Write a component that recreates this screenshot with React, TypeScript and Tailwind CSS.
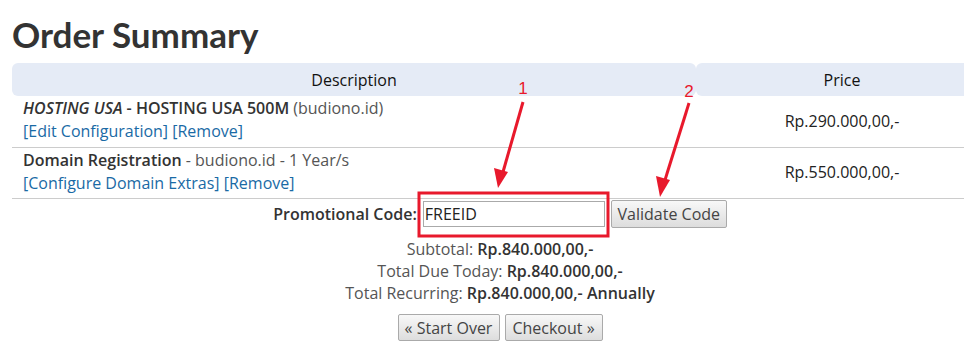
import React from 'react'

const body = { fontFamily: '"Open Sans", "Liberation Sans", sans-serif' }

const btn = 'h-[27px] border border-[#aaaaaa] rounded-[2px] bg-gradient-to-b from-[#f8f8f8] to-[#dddddd] text-[#444]'

export default function App() {
  return (
    <div className="relative w-[964px] h-[359px] overflow-hidden bg-white text-[#555] text-[16px]" style={body}>
      <div className="w-[976px] ml-[12px]">
        <h1 className="pt-[14px] h-[63px] text-[35px] leading-[40px] font-bold text-[#333]" style={{ fontFamily: 'Lato, "Open Sans", sans-serif' }}>
          Order Summary
        </h1>

        <div className="grid grid-cols-[684px_292px] h-[33px] text-[#111]">
          <div className="bg-[#e5ebf6] rounded-[6px] flex items-center justify-center">Description</div>
          <div className="bg-[#e5ebf6] rounded-[6px] flex items-center justify-center">Price</div>
        </div>

        <div className="grid grid-cols-[684px_292px] h-[52px] border-b border-[#cccccc]">
          <div className="pl-[11px] pt-[1px] leading-[23px]">
            <div>
              <span className="text-[#333] font-semibold">
                <em>HOSTING USA</em> - HOSTING USA 500M
              </span>{' '}
              (budiono.id)
            </div>
            <div className="text-[#1a6aa5]">
              <span>[Edit Configuration]</span> <span>[Remove]</span>
            </div>
          </div>
          <div className="flex items-center justify-center pb-[2px] text-[#222]">Rp.290.000,00,-</div>
        </div>

        <div className="grid grid-cols-[684px_292px] h-[51px] border-b border-[#cccccc]">
          <div className="pl-[11px] pt-[1px] leading-[23px]">
            <div>
              <span className="font-semibold text-[#333]">Domain Registration</span> - budiono.id - 1 Year/s
            </div>
            <div className="text-[#1a6aa5]">
              <span>[Configure Domain Extras]</span> <span>[Remove]</span>
            </div>
          </div>
          <div className="flex items-center justify-center pb-[2px] text-[#222]">Rp.550.000,00,-</div>
        </div>

        <div className="flex items-center justify-center h-[30px]">
          <span className="font-semibold text-[#333] mr-[6px]">Promotional Code:</span>
          <div className="w-[182px] h-[26px] border border-[#aaaaaa] flex items-center pl-[1px] text-[#222]">FREEID</div>
          <button className="ml-[6px] h-[28px] w-[116px] border border-[#aaaaaa] rounded-[2px] bg-gradient-to-b from-[#f8f8f8] to-[#dddddd] text-[#444]">
            Validate Code
          </button>
        </div>

        <div className="mt-[9px] flex flex-col items-center leading-[22px]">
          <div>
            Subtotal: <span className="font-semibold text-[#333]">Rp.840.000,00,-</span>
          </div>
          <div>
            Total Due Today: <span className="font-semibold text-[#333]">Rp.840.000,00,-</span>
          </div>
          <div>
            Total Recurring: <span className="font-semibold text-[#333]">Rp.840.000,00,- Annually</span>
          </div>
        </div>

        <div className="mt-[10px] flex justify-center gap-[5px]">
          <button className={`${btn} w-[102px]`}>« Start Over</button>
          <button className={`${btn} w-[98px]`}>Checkout »</button>
        </div>
      </div>

      <svg className="absolute inset-0 pointer-events-none" width="964" height="359" viewBox="0 0 964 359">
        <rect x="419" y="193" width="189" height="43" fill="none" stroke="#e8192c" strokeWidth="3" />
        <text x="523" y="94" textAnchor="middle" fill="#e8192c" fontSize="17" fontFamily="Liberation Sans, sans-serif">1</text>
        <text x="689" y="97" textAnchor="middle" fill="#e8192c" fontSize="17" fontFamily="Liberation Sans, sans-serif">2</text>
        <line x1="523" y1="102" x2="503" y2="172" stroke="#e8192c" strokeWidth="3" />
        <polygon points="498,188 494,168 508,172" fill="#e8192c" />
        <line x1="689" y1="103" x2="665" y2="180" stroke="#e8192c" strokeWidth="3" />
        <polygon points="660,197 656,176 670,180" fill="#e8192c" />
      </svg>
    </div>
  )
}
